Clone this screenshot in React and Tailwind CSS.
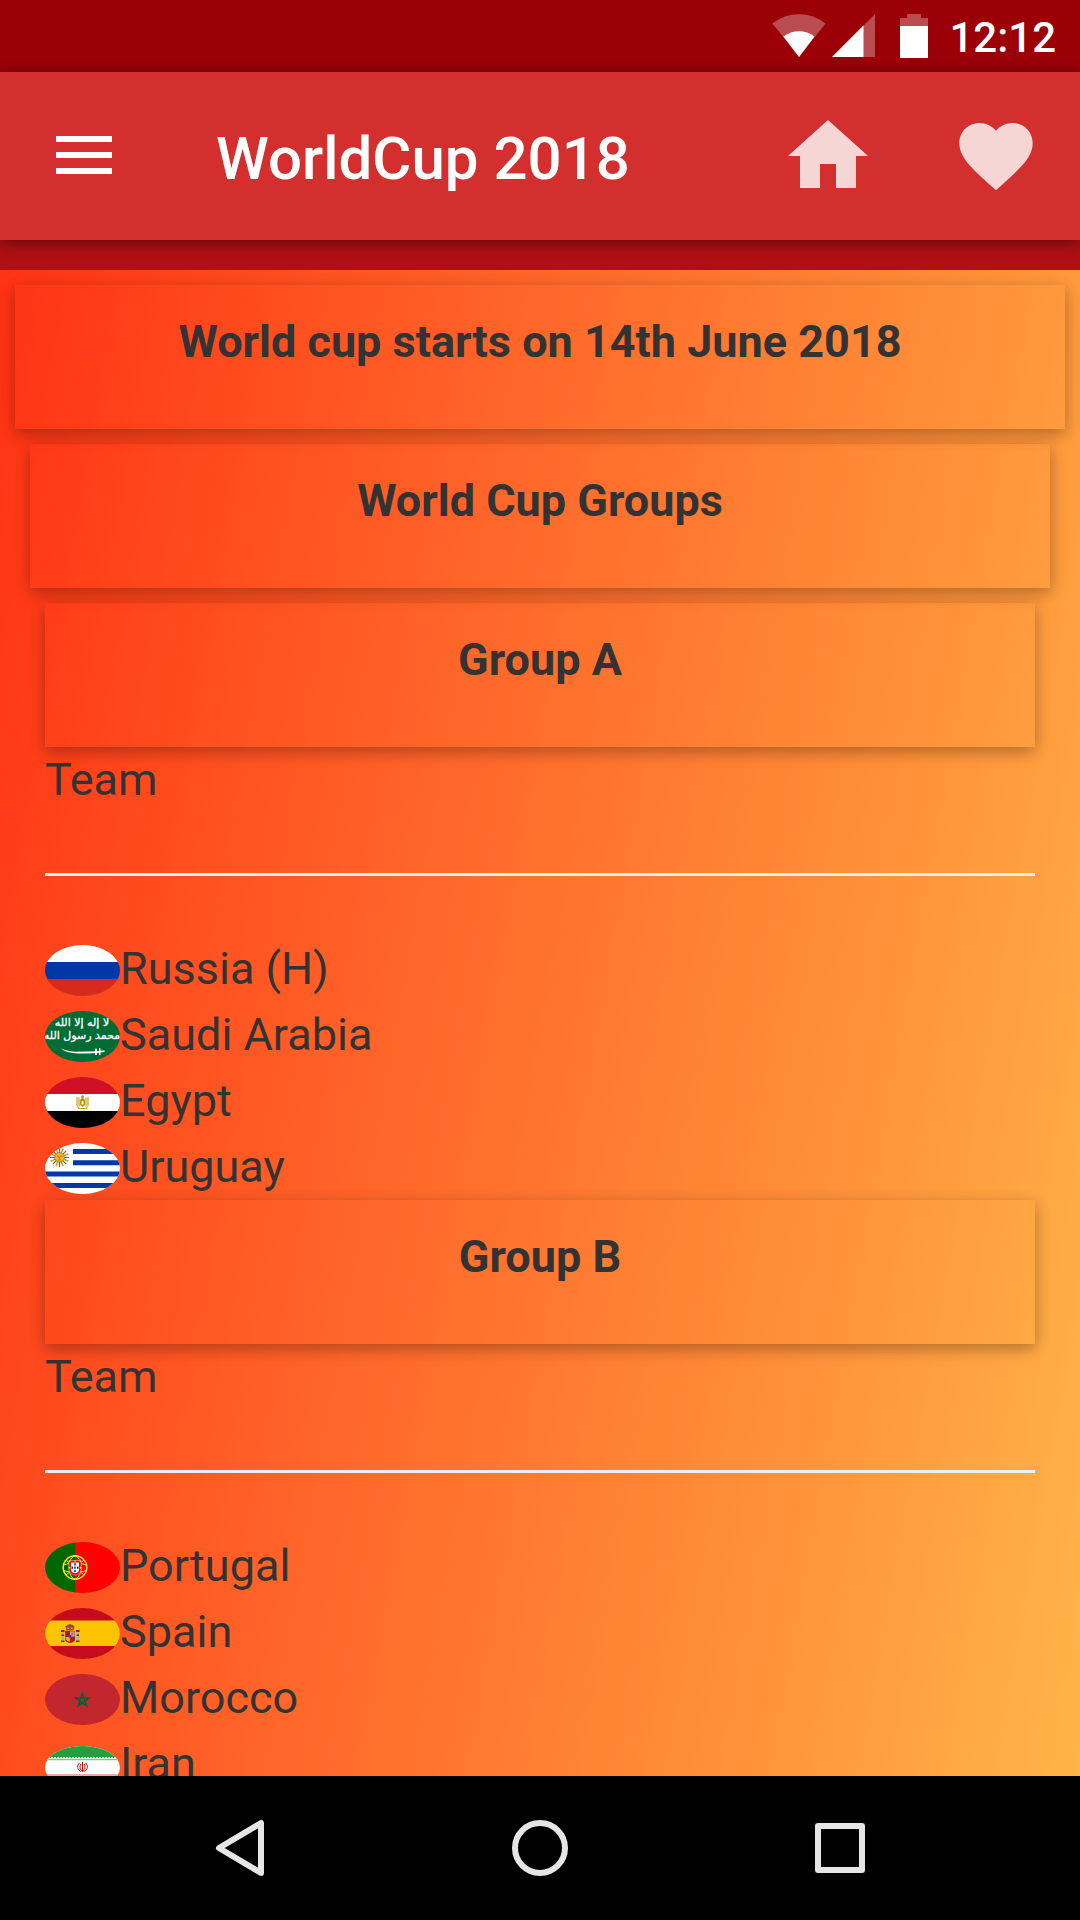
import React from "react";

const SHADOW = "shadow-[0_6px_15px_rgba(0,0,0,0.2),0_3px_15px_rgba(0,0,0,0.12)]";

function Flag({ ratio = "0 0 75 51", size = "h-[51px] mb-1.5", name, children }) {
  return (
    <svg
      viewBox={ratio}
      role="img"
      aria-label={`${name} flag`}
      className={`w-[75px] shrink-0 overflow-hidden rounded-[50%] ${size}`}
    >
      {children}
    </svg>
  );
}

const Russia = () => (
  <Flag name="Russia">
    <path fill="#fff" d="M0 0h75v17H0z" />
    <path fill="#0039a6" d="M0 17h75v17H0z" />
    <path fill="#d52b1e" d="M0 34h75v17H0z" />
  </Flag>
);

const SaudiArabia = () => (
  <Flag name="Saudi Arabia">
    <path fill="#006c35" d="M0 0h75v51H0z" />
    <g
      fill="#fff"
      stroke="#fff"
      strokeWidth="0.3"
      fontFamily="'DejaVu Sans', sans-serif"
      textAnchor="middle"
      aria-hidden="true"
    >
      <text x="37" y="15" fontSize="11">لا إله إلا الله</text>
      <text x="37" y="28" fontSize="11">محمد رسول الله</text>
    </g>
    <path
      fill="#fff"
      d="M16 37.5c4 2 9 3 15 3.200l19-.4v-2.500h2v2.300l2-.2v-3h1.500v2.800l4-.4v1.800l-4 .3v2.600H54v-2.300l-2 .2v2h-2v-2c-10 .7-26 2.200-34-4.400z"
    />
  </Flag>
);

const Egypt = () => (
  <Flag name="Egypt">
    <path fill="#ce1126" d="M0 0h75v17H0z" />
    <path fill="#fff" d="M0 17h75v17H0z" />
    <path d="M0 34h75v17H0z" />
    <g fill="none" stroke="#c9a636">
      <path strokeWidth="1.300" d="M32 20v9M34 20.500v9M41 20.500v9M43 20v9" />
      <path strokeWidth="1" d="M33 31.500h9M32 29.500l3 2M43 29.500l-3 2" />
    </g>
    <path fill="#c09300" d="M36 19.500l1.500-1.500 1.500 1-.6 2.500 1.600 1.500v5l-2.500 2-2.500-2v-5l1.500-1.500z" />
    <path fill="#fff" d="M36.500 24h2v3.500h-2z" />
  </Flag>
);

const Uruguay = () => (
  <Flag name="Uruguay">
    <path fill="#fff" d="M0 0h75v51H0z" />
    <path
      fill="#0038a8"
      d="M28 6h47v5H28zM28 17.300h47v5H28zM0 28.600h75v5H0zM0 39.900h75v5H0z"
    />
    <g stroke="#8a5a10" strokeWidth="1.200">
      <path d="M14.500 5v19M5 14.500h19M7.800 7.800l13.400 13.400M21.200 7.800L7.800 21.200" />
      <path
        stroke="#c98a12"
        d="M10.900 5.700l7.200 17.600M18.100 5.700l-7.200 17.600M5.700 10.900l17.600 7.200M23.300 10.900L5.700 18.100"
      />
    </g>
    <circle cx="14.500" cy="14.500" r="4.800" fill="#f5b916" stroke="#9a6510" strokeWidth="0.600" />
    <path
      fill="none"
      stroke="#8a5a10"
      strokeWidth="0.700"
      d="M12 13.300h1.800M15.200 13.300H17M14.500 13.500v2M13 17h3"
    />
  </Flag>
);

const Portugal = () => (
  <Flag name="Portugal">
    <path fill="#060" d="M0 0h30v51H0z" />
    <path fill="#f00" d="M30 0h45v51H30z" />
    <g fill="none" stroke="#f5e532">
      <circle cx="30" cy="25.500" r="11.800" strokeWidth="1.500" />
      <ellipse cx="30" cy="25.500" rx="6" ry="11.500" />
      <path d="M18.500 23c7-2.500 16-2.500 23 0M18.500 28.500c7 2.500 16 2.500 23 0M21 18l18 15M39 18L21 33" />
    </g>
    <path fill="#e00" stroke="#fff" strokeWidth="0.400" d="M24 18.500h12v9c0 7.500-12 7.500-12 0z" />
    <path fill="#fff" d="M26 20.500h8v7c0 5-8 5-8 0z" />
    <path
      fill="#039"
      d="M29.200 21.200h1.600v2.200h-1.600zM29.200 24.600h1.600v2.200h-1.600zM29.200 28h1.600v2.200h-1.600zM26.500 24.600h1.600v2.200h-1.600zM31.900 24.600h1.600v2.200h-1.600z"
    />
    <path fill="#f5e532" d="M24 18.500h1.300v1.500H24zM29.300 18.300h1.400v1.500h-1.400zM34.700 18.500H36V20h-1.300zM24 25h1.300v1.500H24zM34.700 25H36v1.500h-1.300z" />
  </Flag>
);

const Spain = () => (
  <Flag name="Spain">
    <path fill="#c60b1e" d="M0 0h75v51H0z" />
    <path fill="#ffc400" d="M0 12.500h75v25.500H0z" />
    <path fill="#a8412a" d="M20.500 18.500l2-1.500 2.500-1 2.500 1 2 1.500-1 4h-7z" />
    <path fill="#ffc400" d="M22.500 19.500h1.500v1.500h-1.500zM26 19.500h1.500v1.500H26z" />
    <path fill="#b9a7a0" d="M16.500 24H19v8.500h-2.500zM31.500 24H34v8.500h-2.500z" />
    <path
      fill="#ad1519"
      d="M16 22h3.500v2H16zM31 22h3.500v2H31zM16.500 26.500H19v1.500h-2.500zM31.500 26.500H34v1.500h-2.500zM20 23h10v8c0 5-10 5-10 0z"
    />
    <path fill="#ccb" d="M25 23.500h4.500v5H25z" />
    <path fill="#e8b010" d="M20.500 29H25v4.500c-3 0-4.500-1-4.500-4.500z" />
    <path fill="#c75578" d="M26 24.500h2.500v3H26z" />
    <path fill="#0a58a6" d="M23.800 27h2.400v2.800h-2.400zM16 32.500h3.500V34H16zM31 32.500h3.500V34H31z" />
  </Flag>
);

const Morocco = () => (
  <Flag name="Morocco">
    <path fill="#c1272d" d="M0 0h75v51H0z" />
    <path
      fill="none"
      stroke="#006233"
      strokeWidth="1.500"
      d="M37.500 19.200l4.100 12.700-10.800-7.800h13.400l-10.800 7.800z"
    />
  </Flag>
);

const Iran = () => (
  <Flag name="Iran" ratio="0 0 75 43" size="h-[43px] mb-2">
    <path fill="#fff" d="M0 0h75v43H0z" />
    <path fill="#239f40" d="M0 0h75v12H0z" />
    <path fill="#da0000" d="M0 31h75v12H0z" />
    <path stroke="#fff" strokeWidth="1" strokeDasharray="2 1" d="M0 11.800h75M0 31h75" />
    <path stroke="#7cc98d" strokeWidth="1.500" d="M0 13.500h75" />
    <path stroke="#e88c8c" strokeWidth="1.500" d="M0 29h75" />
    <path
      fill="none"
      stroke="#da0000"
      strokeWidth="1"
      d="M37.500 16v10M34.500 17c-3 2.500-2.500 6.500 1.500 8.500M40.500 17c3 2.500 2.500 6.500-1.500 8.500M35.800 18c-1.500 3-.8 5.500 1.700 7.500M39.200 18c1.500 3 .8 5.500-1.700 7.500"
    />
  </Flag>
);

const groups = [
  {
    title: "Group A",
    teams: [
      ["Russia (H)", Russia],
      ["Saudi Arabia", SaudiArabia],
      ["Egypt", Egypt],
      ["Uruguay", Uruguay],
    ],
  },
  {
    title: "Group B",
    teams: [
      ["Portugal", Portugal],
      ["Spain", Spain],
      ["Morocco", Morocco],
      ["Iran", Iran],
    ],
  },
];

function Card({ as: Tag = "h2", children }) {
  return (
    <Tag className={`h-36 pt-6 text-center font-bold ${SHADOW}`}>{children}</Tag>
  );
}

function Group({ title, teams }) {
  return (
    <section>
      <Card as="h3">{title}</Card>
      <p>Team</p>
      <hr className="my-[60px] border-t-3 border-[#eee]" />
      <ul>
        {teams.map(([name, Icon]) => (
          <li key={name} className="flex h-[66px] items-end">
            <Icon />
            <span>{name}</span>
          </li>
        ))}
      </ul>
    </section>
  );
}

function StatusBar() {
  return (
    <div className="flex h-[72px] shrink-0 items-end justify-end bg-[#9b0007] pr-6 pb-3.5 text-white">
      <svg viewBox="0 0 54 44" className="mr-1.5 h-11 w-[54px]" fill="currentColor" aria-hidden="true">
        <path opacity="0.300" d="M27 43L.500 9.500C16-3 38-3 53.500 9.500z" />
        <path d="M27 43L11.500 22.500c9-7 22-7 31 0z" />
      </svg>
      <svg viewBox="0 0 43 44" className="mr-6 h-11 w-[43px]" fill="currentColor" aria-hidden="true">
        <path opacity="0.300" d="M43 0v43H0z" />
        <path d="M31.500 11.500V43H0z" />
      </svg>
      <svg viewBox="0 0 30 44" className="mr-5 h-11 w-[30px]" fill="currentColor" aria-hidden="true">
        <path opacity="0.300" d="M8 0h14v4h7v40H1V4h7z" />
        <path d="M1 12h28v32H1z" />
      </svg>
      <time className="text-[42px] leading-10 font-medium">12:12</time>
    </div>
  );
}

function Header() {
  return (
    <header className="relative z-10 flex h-[168px] shrink-0 items-center bg-[#d32f2f] pr-10 pl-14 text-white shadow-[0_3px_15px_rgba(0,0,0,0.45)]">
      <button type="button" aria-label="Menu" className="w-14">
        <svg viewBox="0 0 56 40" className="h-10 w-14" fill="currentColor">
          <path d="M0 0h56v6H0zM0 16h56v6H0zM0 32h56v6H0z" />
        </svg>
      </button>
      <h1 className="ml-26 flex-1 pt-1.5 text-[60px] leading-[72px] font-medium">WorldCup 2018</h1>
      <div className="flex items-center gap-19 text-white/80">
        <button type="button" aria-label="Home">
          <svg viewBox="0 0 24 24" className="size-24" fill="currentColor">
            <path d="M10 20v-6h4v6h5v-8h3L12 3 2 12h3v8z" />
          </svg>
        </button>
        <button type="button" aria-label="Favourites">
          <svg viewBox="0 0 24 24" className="size-22" fill="currentColor">
            <path d="M12 21.350l-1.450-1.320C5.400 15.360 2 12.280 2 8.500 2 5.420 4.420 3 7.500 3c1.740 0 3.410.81 4.500 2.090C13.090 3.810 14.760 3 16.500 3 19.580 3 22 5.420 22 8.500c0 3.780-3.400 6.860-8.550 11.540L12 21.350z" />
          </svg>
        </button>
      </div>
    </header>
  );
}

function NavBar() {
  const icon = "size-[72px]";
  return (
    <nav
      className="flex h-36 shrink-0 items-center justify-center gap-[228px] bg-black text-[#e6e6e6]"
      aria-label="System"
    >
      <button type="button" aria-label="Back">
        <svg viewBox="0 0 72 72" className={icon} fill="none" stroke="currentColor" strokeWidth="6" strokeLinejoin="round">
          <path d="M57 11v50L15 36z" />
        </svg>
      </button>
      <button type="button" aria-label="Home screen">
        <svg viewBox="0 0 72 72" className={icon} fill="none" stroke="currentColor" strokeWidth="6">
          <circle cx="36" cy="36" r="25" />
        </svg>
      </button>
      <button type="button" aria-label="Recent apps">
        <svg viewBox="0 0 72 72" className={icon} fill="none" stroke="currentColor" strokeWidth="6" strokeLinejoin="round">
          <path d="M14 14h44v44H14z" />
        </svg>
      </button>
    </nav>
  );
}

export default function App() {
  return (
    <div className="flex h-screen flex-col overflow-hidden font-[Roboto,sans-serif]">
      <StatusBar />
      <Header />
      <div className="h-[30px] shrink-0 bg-[#b00f14]" />
      <main className="min-h-0 flex-1 overflow-hidden bg-[linear-gradient(100deg,#ff3314,#ff6a2b_43%,#ff983c_79%,#ffb54a)] p-[15px] text-[45px] leading-[66px] text-[#333]">
        <Card>World cup starts on 14th June 2018</Card>
        <div className="p-[15px]">
          <Card>World Cup Groups</Card>
          <div className="p-[15px]">
            {groups.map((group) => (
              <Group key={group.title} {...group} />
            ))}
          </div>
        </div>
      </main>
      <NavBar />
    </div>
  );
}
